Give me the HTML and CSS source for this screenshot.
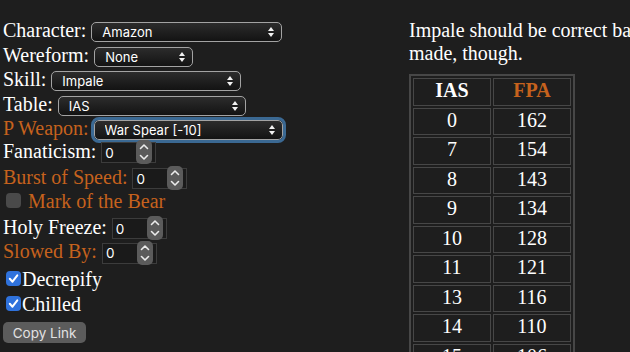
FILE: index.html
```html
<!DOCTYPE html>
<html lang="en">
<head>
<meta charset="utf-8">
<title>Breakpoint Calculator</title>
<link rel="stylesheet" href="styles.css">
</head>
<body>
<main class="page">
  <form class="controls">
    <div class="row">
      <span class="lbl">Character:</span>
      <span class="sel sel--char"><select><option>Amazon</option></select><svg class="arr" viewBox="0 0 6 10"><path d="M3 0L6 4H0zM0 6h6l-3 4z"/></svg></span>
    </div>
    <div class="row">
      <span class="lbl">Wereform:</span>
      <span class="sel sel--were"><select><option>None</option></select><svg class="arr" viewBox="0 0 6 10"><path d="M3 0L6 4H0zM0 6h6l-3 4z"/></svg></span>
    </div>
    <div class="row">
      <span class="lbl">Skill:</span>
      <span class="sel sel--skill"><select><option>Impale</option></select><svg class="arr" viewBox="0 0 6 10"><path d="M3 0L6 4H0zM0 6h6l-3 4z"/></svg></span>
    </div>
    <div class="row">
      <span class="lbl">Table:</span>
      <span class="sel sel--table"><select><option>IAS</option></select><svg class="arr" viewBox="0 0 6 10"><path d="M3 0L6 4H0zM0 6h6l-3 4z"/></svg></span>
    </div>
    <div class="row row--short">
      <span class="lbl hl">P Weapon:</span>
      <span class="sel sel--weapon sel--focus"><select><option>War Spear [-10]</option></select><svg class="arr" viewBox="0 0 6 10"><path d="M3 0L6 4H0zM0 6h6l-3 4z"/></svg></span>
    </div>
    <div class="row row--tall">
      <span class="lbl">Fanaticism:</span>
      <span class="num"><input type="text" value="0"><span class="spin"><svg viewBox="0 0 16 24"><path d="M4.5 8.5L8 5l3.5 3.5M4.5 15.5L8 19l3.5-3.5"/></svg></span></span>
    </div>
    <div class="row">
      <span class="lbl hl">Burst of Speed:</span>
      <span class="num"><input type="text" value="0"><span class="spin"><svg viewBox="0 0 16 24"><path d="M4.5 8.5L8 5l3.5 3.5M4.5 15.5L8 19l3.5-3.5"/></svg></span></span>
    </div>
    <div class="row row--mid check check--spaced">
      <span class="box"></span>
      <span class="lbl hl">Mark of the Bear</span>
    </div>
    <div class="row">
      <span class="lbl">Holy Freeze:</span>
      <span class="num"><input type="text" value="0"><span class="spin"><svg viewBox="0 0 16 24"><path d="M4.5 8.5L8 5l3.5 3.5M4.5 15.5L8 19l3.5-3.5"/></svg></span></span>
    </div>
    <div class="row row--xtall">
      <span class="lbl hl">Slowed By:</span>
      <span class="num"><input type="text" value="0"><span class="spin"><svg viewBox="0 0 16 24"><path d="M4.5 8.5L8 5l3.5 3.5M4.5 15.5L8 19l3.5-3.5"/></svg></span></span>
    </div>
    <div class="row check">
      <span class="box box--on"><svg viewBox="0 0 15 15"><path d="M3.8 7.8l2.7 2.9 4.8-6.4"/></svg></span>
      <span class="lbl">Decrepify</span>
    </div>
    <div class="row check">
      <span class="box box--on"><svg viewBox="0 0 15 15"><path d="M3.8 7.8l2.7 2.9 4.8-6.4"/></svg></span>
      <span class="lbl">Chilled</span>
    </div>
    <div class="btn-row">
      <button type="button" class="copy">Copy Link</button>
    </div>
  </form>

  <section class="info">
    <p class="note">Impale should be correct based on testing, but some assumptions were<br>made, though.</p>
    <table class="bp">
      <thead>
        <tr><th>IAS</th><th class="hl">FPA</th></tr>
      </thead>
      <tbody>
        <tr><td>0</td><td>162</td></tr>
        <tr><td>7</td><td>154</td></tr>
        <tr><td>8</td><td>143</td></tr>
        <tr><td>9</td><td>134</td></tr>
        <tr><td>10</td><td>128</td></tr>
        <tr><td>11</td><td>121</td></tr>
        <tr><td>13</td><td>116</td></tr>
        <tr><td>14</td><td>110</td></tr>
        <tr><td>15</td><td>106</td></tr>
      </tbody>
    </table>
  </section>
</main>
</body>
</html>
```

FILE: styles.css
```css
html, body {
  margin: 0;
  height: 100%;
  overflow: hidden;
  background: #1e1e1e;
}

body {
  font-family: "Liberation Serif", "Times New Roman", serif;
  font-size: 20px;
  line-height: 23px;
  color: #ffffff;
}

.page {
  display: flex;
  align-items: flex-start;
  padding-top: 19px;
}

.hl {
  color: #c6621d;
}

/* ---------- left column ---------- */
.controls {
  flex: none;
  width: 409px;
  box-sizing: border-box;
  padding-left: 3px;
  margin: 0;
}

.row {
  display: flex;
  align-items: baseline;
  gap: 5px;
  height: 24.5px;
}
.row--short { height: 22.5px; }
.row--tall { height: 26px; }
.row--mid { height: 25.5px; }
.row--xtall { height: 28px; }

.lbl {
  white-space: nowrap;
}

/* selects */
.sel {
  position: relative;
  display: inline-block;
  height: 20px;
}
.sel--char { width: 191px; }
.sel--were { width: 99px; }
.sel--skill { width: 190px; }
.sel--table { width: 188px; }
.sel--weapon { width: 189px; }

.sel select {
  -webkit-appearance: none;
  appearance: none;
  display: block;
  width: 100%;
  height: 20px;
  box-sizing: border-box;
  margin: 0;
  padding: 0 20px 0 10px;
  border: 1px solid #a3a3a3;
  border-radius: 5px;
  background: linear-gradient(#2c2c2c, #131313);
  color: #ffffff;
  font-family: Inter, "Liberation Sans", sans-serif;
  font-size: 13px;
  line-height: 18px;
}

.sel--focus select {
  outline: 3px solid #3b6993;
  outline-offset: 0;
}

.arr {
  position: absolute;
  right: 8px;
  top: 5px;
  width: 6px;
  height: 10px;
  fill: #f2f2f2;
  pointer-events: none;
}

/* number inputs */
.num {
  position: relative;
  display: inline-block;
  width: 55px;
  height: 21px;
}
.num input {
  display: block;
  width: 100%;
  height: 21px;
  box-sizing: border-box;
  margin: 0;
  padding: 0 0 0 3px;
  border: 1px solid #3c3c3c;
  background: #1a1a1a;
  color: #ffffff;
  font-family: Inter, "Liberation Sans", sans-serif;
  font-size: 13.5px;
}
.spin {
  position: absolute;
  right: 4px;
  top: -2px;
  width: 16px;
  height: 24px;
  border-radius: 5px;
  background: #5b5b5b;
}
.spin svg {
  display: block;
  width: 16px;
  height: 24px;
  fill: none;
  stroke: #ececec;
  stroke-width: 1.6;
  stroke-linecap: round;
  stroke-linejoin: round;
}

/* checkboxes */
.check {
  gap: 1px;
}
.check--spaced {
  gap: 7px;
}
.box {
  flex: none;
  width: 15px;
  height: 15px;
  margin-left: 3px;
  margin-bottom: -2.5px;
  border-radius: 4px;
  background: #4a4a4a;
  box-sizing: border-box;
}
.box--on {
  background: #2f72dc;
}
.box svg {
  display: block;
  width: 15px;
  height: 15px;
  fill: none;
  stroke: #ffffff;
  stroke-width: 2;
  stroke-linecap: round;
  stroke-linejoin: round;
}

/* button */
.btn-row {
  padding-top: 5px;
}
.copy {
  display: block;
  width: 83px;
  height: 21px;
  padding: 0;
  border: none;
  border-radius: 5px;
  background: #5c5c5c;
  color: #e2e2e2;
  font-family: Inter, "Liberation Sans", sans-serif;
  font-size: 13.5px;
}

/* ---------- right column ---------- */
.info {
  flex: none;
  width: 600px;
}

.note {
  margin: 0;
  white-space: nowrap;
}

.bp {
  margin-top: 9px;
  border: 2px solid #474747;
  border-spacing: 2px;
}
.bp th,
.bp td {
  width: 74px;
  padding: 0 1px 3px;
  border: 1px solid #474747;
  line-height: 22.5px;
  font-size: 20px;
  text-align: center;
}
.bp th {
  font-weight: bold;
}
```
